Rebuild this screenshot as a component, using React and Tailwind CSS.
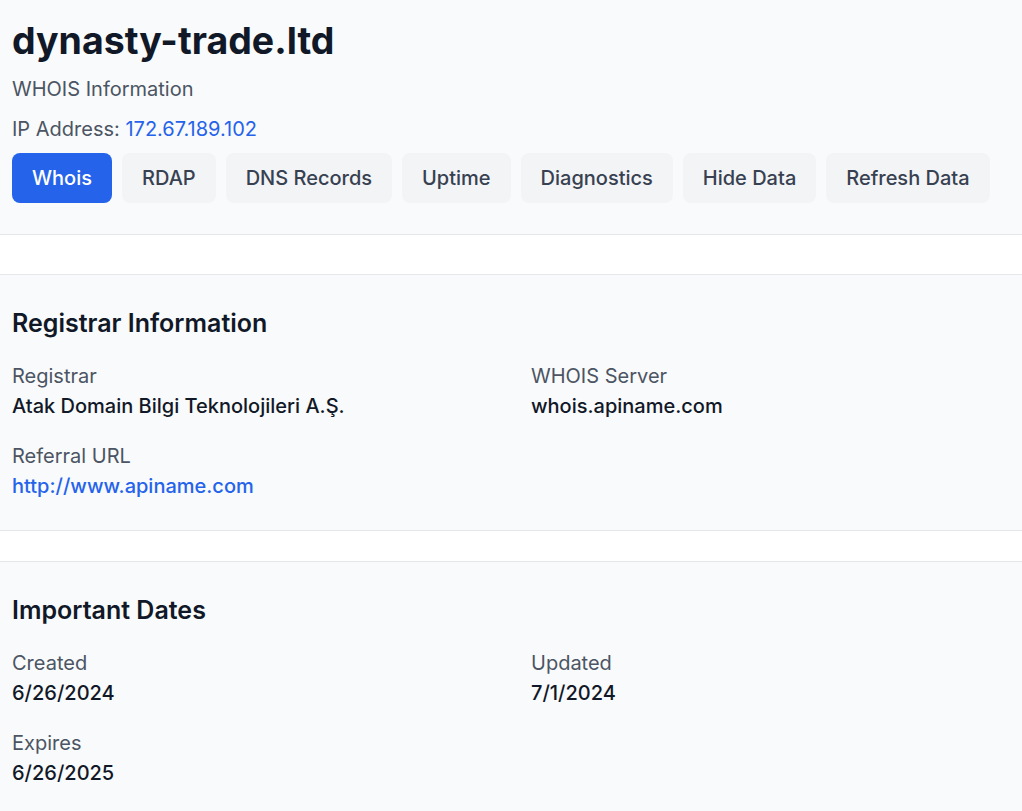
import React from "react";

const buttons = ["Whois", "RDAP", "DNS Records", "Uptime", "Diagnostics", "Hide Data", "Refresh Data"];

function Field({ label, value, link }) {
  return (
    <div className="flex flex-col">
      <div className="text-xl leading-7 text-[#4b5563]">{label}</div>
      <div className={"text-xl leading-7 font-medium mt-[2px] " + (link ? "text-[#2563eb]" : "text-[#111827]")}>{value}</div>
    </div>
  );
}

function Section({ title, fields }) {
  return (
    <section className="bg-[#f9fafb] border-y border-[#e5e7eb] px-3 pt-8 pb-[30px]">
      <h2 className="text-[25px] leading-8 font-semibold text-[#111827] mb-[23px]">{title}</h2>
      <div className="grid grid-cols-2 gap-x-10 gap-y-[22px]">
        {fields.map((f) => (
          <Field key={f.label} {...f} />
        ))}
      </div>
    </section>
  );
}

export default function App() {
  return (
    <div className="min-h-screen bg-white" style={{ fontFamily: "Inter, 'Noto Sans', sans-serif" }}>
      <header className="bg-[#f9fafb] border-b border-[#e5e7eb] px-3 pt-[21px] pb-[31px]">
        <h1 className="text-[37.5px] leading-10 font-bold text-[#111827]">dynasty-trade.ltd</h1>
        <p className="text-xl leading-7 text-[#4b5563] mt-[14px]">WHOIS Information</p>
        <p className="text-xl leading-7 text-[#4b5563] mt-3">
          IP Address: <span className="text-[#2563eb]">172.67.189.102</span>
        </p>
        <div className="flex gap-2.5 mt-[10px]">
          {buttons.map((b, i) => (
            <button
              key={b}
              className={
                "px-5 py-[11px] rounded-lg text-xl leading-7 font-medium " +
                (i === 0 ? "bg-[#2563eb] text-white" : "bg-[#f3f4f6] text-[#374151]")
              }
            >
              {b}
            </button>
          ))}
        </div>
      </header>
      <div className="h-[39px]" />
      <Section
        title="Registrar Information"
        fields={[
          { label: "Registrar", value: "Atak Domain Bilgi Teknolojileri A.Ş." },
          { label: "WHOIS Server", value: "whois.apiname.com" },
          { label: "Referral URL", value: "http://www.apiname.com", link: true },
        ]}
      />
      <div className="h-[30px]" />
      <Section
        title="Important Dates"
        fields={[
          { label: "Created", value: "6/26/2024" },
          { label: "Updated", value: "7/1/2024" },
          { label: "Expires", value: "6/26/2025" },
        ]}
      />
    </div>
  );
}
